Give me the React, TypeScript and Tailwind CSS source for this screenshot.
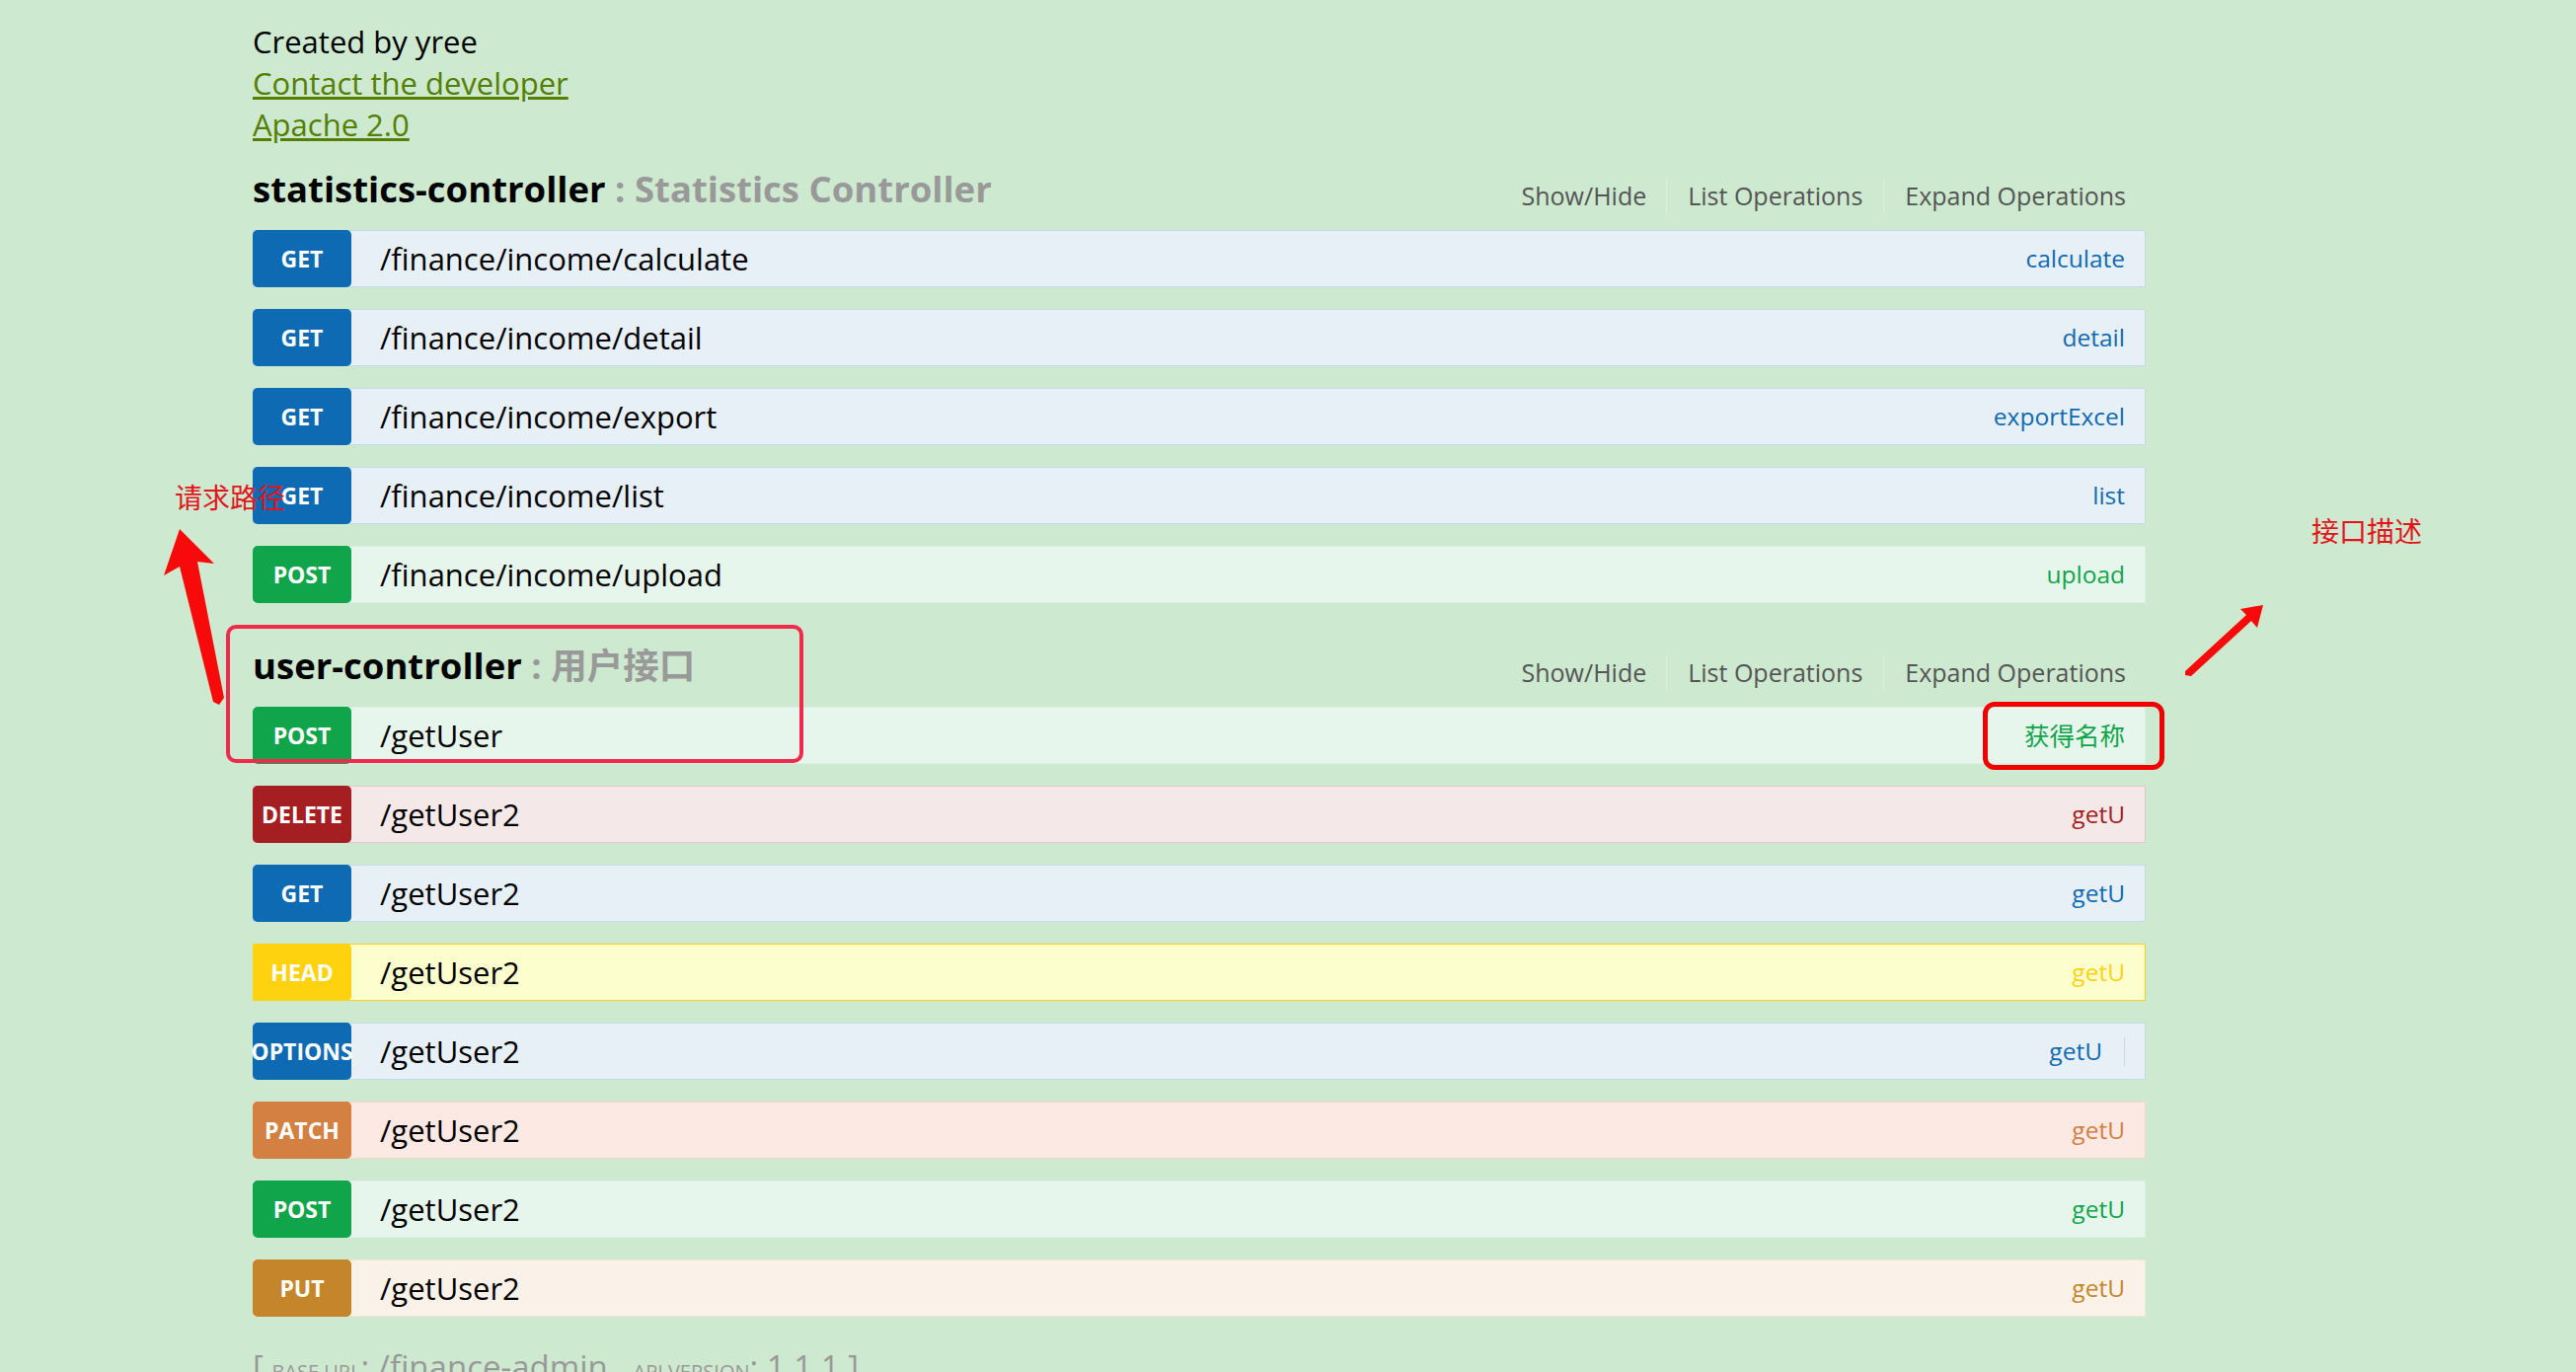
const font = "font-['Open_Sans','Noto_Sans_CJK_SC',sans-serif]";

type Op = {
  method: string;
  path: string;
  desc: string;
  extraSep?: boolean;
};

const styles: Record<string, { badge: string; row: string; text: string; sep: string }> = {
  GET: { badge: "bg-[#0f6ab4]", row: "bg-[#e7f0f7] border-[#c3d9ec]", text: "text-[#0f6ab4]", sep: "border-[#c3d9ec]" },
  OPTIONS: { badge: "bg-[#0f6ab4]", row: "bg-[#e7f0f7] border-[#c3d9ec]", text: "text-[#0f6ab4]", sep: "border-[#c3d9ec]" },
  POST: { badge: "bg-[#10a54a]", row: "bg-[#e7f6ec] border-[#dcefe2]", text: "text-[#10a54a]", sep: "border-[#c3e8d1]" },
  DELETE: { badge: "bg-[#a41e22]", row: "bg-[#f5e8e8] border-[#e8c6c7]", text: "text-[#a41e22]", sep: "border-[#e8c6c7]" },
  HEAD: { badge: "bg-[#ffd20f]", row: "bg-[#fcffcd] border-[#ffd20f]", text: "text-[#ffd20f]", sep: "border-[#ffd20f]" },
  PATCH: { badge: "bg-[#d38042]", row: "bg-[#fce9e3] border-[#f5d5c3]", text: "text-[#d38042]", sep: "border-[#f5d5c3]" },
  PUT: { badge: "bg-[#c5862b]", row: "bg-[#faf2e9] border-[#f4e5d2]", text: "text-[#c5862b]", sep: "border-[#f0e0ca]" },
};

const statistics: Op[] = [
  { method: "GET", path: "/finance/income/calculate", desc: "calculate" },
  { method: "GET", path: "/finance/income/detail", desc: "detail" },
  { method: "GET", path: "/finance/income/export", desc: "exportExcel" },
  { method: "GET", path: "/finance/income/list", desc: "list" },
  { method: "POST", path: "/finance/income/upload", desc: "upload" },
];

const users: Op[] = [
  { method: "POST", path: "/getUser", desc: "获得名称" },
  { method: "DELETE", path: "/getUser2", desc: "getU" },
  { method: "GET", path: "/getUser2", desc: "getU" },
  { method: "HEAD", path: "/getUser2", desc: "getU" },
  { method: "OPTIONS", path: "/getUser2", desc: "getU", extraSep: true },
  { method: "PATCH", path: "/getUser2", desc: "getU" },
  { method: "POST", path: "/getUser2", desc: "getU" },
  { method: "PUT", path: "/getUser2", desc: "getU" },
];

const OperationRow = ({ op }: { op: Op }) => {
  const s = styles[op.method];
  const cjk = /[\u4e00-\u9fff]/.test(op.desc);
  return (
    <li className={`flex h-[58px] items-center border ${s.row}`}>
      <span
        className={`-my-px -ml-px flex h-[58px] w-[100px] shrink-0 items-center justify-center rounded-[5px] text-[23px] font-bold text-white ${s.badge}`}
      >
        {op.method}
      </span>
      <span className="flex-1 pl-[29px] text-[31px] text-black">{op.path}</span>
      <span className={`${cjk ? "text-[25.5px]" : "text-[24.5px]"} ${s.text} ${op.extraSep ? "" : "pr-[20px]"}`}>
        {op.desc}
      </span>
      {op.extraSep && <span className={`ml-[22px] mr-[20px] h-[29px] border-l ${s.sep}`} />}
    </li>
  );
};

const Section = ({ name, title, ops }: { name: string; title: string; ops: Op[] }) => {
  return (
    <div>
      <div className="flex h-[60px] items-center justify-between">
        <h2 className="text-[36.5px] font-bold">
          <span className="text-black">{name}</span>
          <span className="text-[#999]"> : {title}</span>
        </h2>
        <ul className="mt-[15px] flex text-[25px] text-[#555]">
          <li className="border-r border-[#dcefdc] pr-[20px]">Show/Hide</li>
          <li className="border-r border-[#dcefdc] px-[21px]">List Operations</li>
          <li className="pl-[21px] pr-[20px]">Expand Operations</li>
        </ul>
      </div>
      <ul className="mt-[12px] flex flex-col gap-[22px]">
        {ops.map((op, i) => (
          <OperationRow key={i} op={op} />
        ))}
      </ul>
    </div>
  );
};

export default function App() {
  return (
    <div className={`relative h-[1390px] w-[2610px] overflow-hidden bg-[#cde9cf] ${font}`}>
      <div className="w-[2174px] pl-[256px] pt-[21px]">
        <div className="text-[31px] leading-[42px]">
          <div className="text-black">Created by yree</div>
          <div>
            <a className="text-[#547f00] underline">Contact the developer</a>
          </div>
          <div>
            <a className="text-[#547f00] underline">Apache 2.0</a>
          </div>
        </div>

        <div className="mt-[14px] flex flex-col gap-[33px]">
          <Section name="statistics-controller" title="Statistics Controller" ops={statistics} />
          <Section name="user-controller" title="用户接口" ops={users} />
        </div>

        <div className="mt-[30px] text-[33px] leading-[42px] text-[#999]">
          [ <span className="text-[20px]">BASE URL</span>: /finance-admin , <span className="text-[20px]">API VERSION</span>: 1.1.1 ]
        </div>
      </div>

      {/* annotations */}
      <div className="absolute left-[229px] top-[633px] h-[140px] w-[585px] rounded-[10px] border-4 border-[#ef2a4c]" />
      <div className="absolute left-[2009px] top-[711px] h-[69px] w-[184px] rounded-[12px] border-[5px] border-[#f20000]" />
      <div className="absolute left-[177px] top-[484px] text-[28px] leading-[40px] text-[#e3141b]">请求路径</div>
      <div className="absolute left-[2342px] top-[518px] text-[28px] leading-[40px] text-[#e3141b]">接口描述</div>
      <svg className="absolute left-0 top-0" width="2610" height="1390">
        <polygon
          points="182,536 217,571 200,569 227,707 222,714 216,711 182,574 166,583"
          fill="#f80a0a"
          strokeLinejoin="round"
        />
        <polygon
          points="2293,613 2287,636 2281,629 2220,685 2214,684 2214,680 2276,623 2270,617"
          fill="#f80a0a"
        />
      </svg>
    </div>
  );
}
